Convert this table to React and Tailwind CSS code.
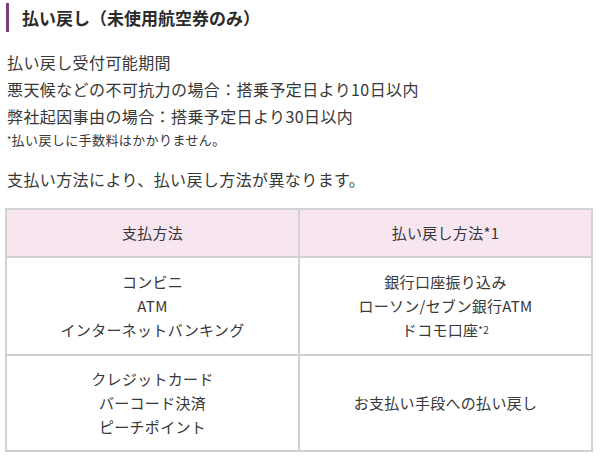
export default function App() {
  const font = { fontFamily: '"Noto Sans CJK JP", "Noto Sans", sans-serif' };
  return (
    <div className="w-[600px] h-[456px] bg-white text-[#383838] overflow-hidden" style={font}>
      <div className="ml-[6px] mt-[3px] h-[29px] flex items-center border-l-[3px] border-[#7b3f80] pl-[13px] text-[17px] font-bold leading-none text-[#2b2b2b]">
        払い戻し（未使用航空券のみ）
      </div>
      <div className="pl-[7px] mt-[17px] text-[16px] leading-[27px] tracking-[0.4px]">
        <p>払い戻し受付可能期間</p>
        <p>悪天候などの不可抗力の場合：搭乗予定日より10日以内</p>
        <p>弊社起因事由の場合：搭乗予定日より30日以内</p>
        <p className="text-[13px] leading-[21px] -mt-[1px]">
          <span className="text-[9px] align-top">*</span>払い戻しに手数料はかかりません。
        </p>
        <p className="mt-[16px]">支払い方法により、払い戻し方法が異なります。</p>
      </div>
      <table className="ml-[5px] mt-[15px] w-[588px] border-collapse text-[15px] tracking-[0.3px] text-center">
        <thead>
          <tr className="bg-[#f7e6f0] h-[48px]">
            <th className="font-normal border-2 border-[#d2d2d2] w-1/2">支払方法</th>
            <th className="font-normal border-2 border-[#d2d2d2] w-1/2">払い戻し方法*1</th>
          </tr>
        </thead>
        <tbody className="leading-[24px]">
          <tr className="h-[98px]">
            <td className="border-2 border-[#d2d2d2]">
              <div>コンビニ</div>
              <div>ATM</div>
              <div>インターネットバンキング</div>
            </td>
            <td className="border-2 border-[#d2d2d2]">
              <div>銀行口座振り込み</div>
              <div>ローソン/セブン銀行ATM</div>
              <div>
                ドコモ口座<span className="text-[10px] align-top">*2</span>
              </div>
            </td>
          </tr>
          <tr className="h-[96px]">
            <td className="border-2 border-[#d2d2d2]">
              <div>クレジットカード</div>
              <div>バーコード決済</div>
              <div>ピーチポイント</div>
            </td>
            <td className="border-2 border-[#d2d2d2]">お支払い手段への払い戻し</td>
          </tr>
        </tbody>
      </table>
    </div>
  );
}
